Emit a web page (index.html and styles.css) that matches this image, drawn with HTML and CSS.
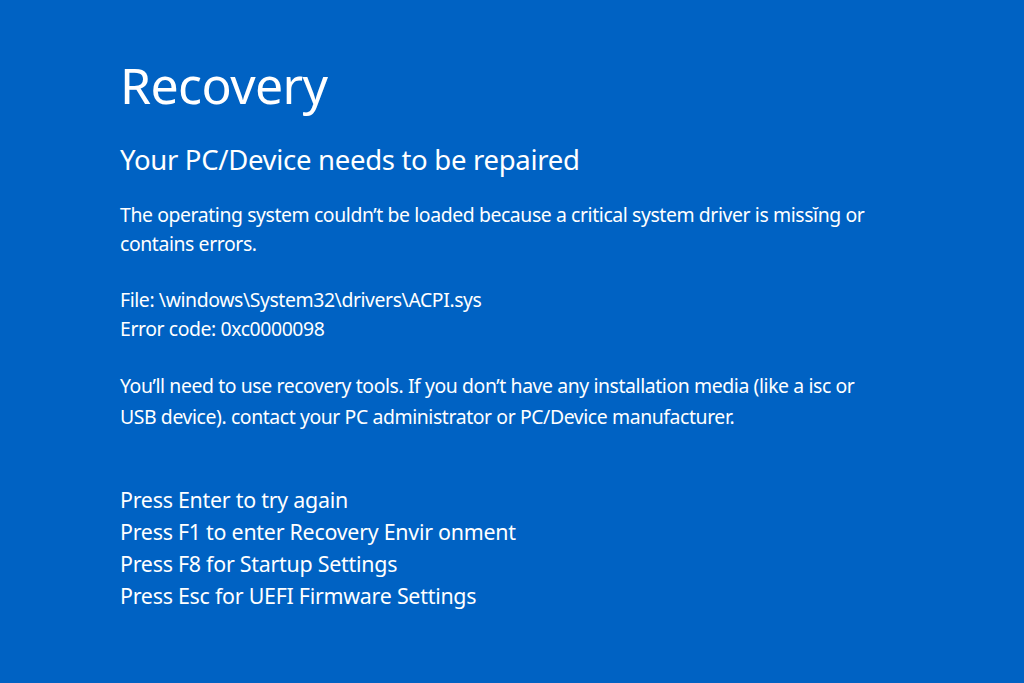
FILE: index.html
```html
<!DOCTYPE html>
<html lang="en">
<head>
<meta charset="utf-8">
<title>Recovery</title>
<link rel="stylesheet" href="styles.css">
</head>
<body>
<main class="screen">
  <h1 class="title">Recovery</h1>
  <h2 class="subtitle">Your PC/Device needs to be repaired</h2>
  <p class="para">The operating system couldn’t be loaded because a critical system driver is missĭng or<br>contains errors.</p>
  <p class="para">File: \windows\System32\drivers\ACPI.sys<br>Error code: 0xc0000098</p>
  <p class="para para-last">You’ll need to use recovery tools. If you don’t have any installation media (like a isc or<br>USB device). contact your PC administrator or PC/Device manufacturer.</p>
  <ul class="keys">
    <li>Press Enter to try again</li>
    <li>Press F1 to enter Recovery Envir onment</li>
    <li>Press F8 for Startup Settings</li>
    <li>Press Esc for UEFI Firmware Settings</li>
  </ul>
</main>
</body>
</html>
```
FILE: styles.css
```css
html, body {
  margin: 0;
  padding: 0;
  height: 100%;
}
body {
  background: #0062c3;
  color: #ffffff;
  font-family: "Noto Sans", "Open Sans", sans-serif;
}
.screen {
  padding: 50px 0 0 120px;
  box-sizing: border-box;
  height: 100%;
}
.title {
  margin: 0;
  font-weight: 400;
  font-size: 50px;
  line-height: 70px;
  letter-spacing: -0.6px;
}
.subtitle {
  margin: 20px 0 0;
  font-weight: 400;
  font-size: 27.5px;
  line-height: 40px;
  letter-spacing: -0.3px;
}
.para {
  margin: 20px 0 0;
  font-size: 19.4px;
  line-height: 29px;
  letter-spacing: -0.4px;
}
.para + .para {
  margin-top: 27px;
}
.para-last {
  line-height: 31px;
}
.keys {
  list-style: none;
  margin: 52px 0 0;
  padding: 0;
  font-size: 21.4px;
  line-height: 32px;
  letter-spacing: -0.25px;
}
```
